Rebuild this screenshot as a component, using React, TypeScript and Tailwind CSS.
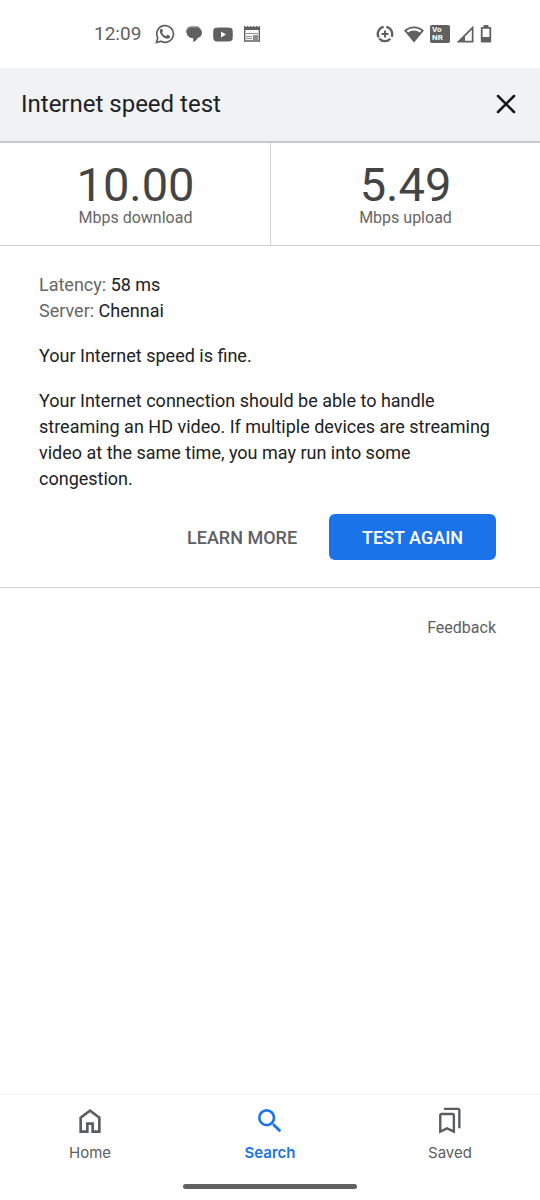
import type { ReactNode } from "react";

type Metric = { value: string; label: string };

const metrics: Metric[] = [
  { value: "10.00", label: "Mbps download" },
  { value: "5.49", label: "Mbps upload" },
];

const WhatsAppIcon = () => (
  <svg viewBox="0 0 24 24" className="size-5" fill="none" stroke="currentColor" strokeWidth="2" aria-hidden="true">
    <path d="M1.8 22.2l1.5-5.6a10 10 0 1 1 3.9 4z" />
    <path
      fill="currentColor"
      stroke="none"
      d="M8.9 6.4c-.3-.6-.7-.6-1-.6-1.300 0-2.100 1.300-2.100 2.800 0 3.700 5 9 9.200 9 1.600 0 3.200-1 3.200-2.600 0-.5-.1-.6-.5-.8l-2.300-1.100c-.4-.2-.7-.1-.9.2l-.9 1.100c-.2.2-.4.3-.7.1-1.900-.8-3.400-2.200-4.400-4-.1-.3 0-.5.200-.7l.6-.8c.2-.3.2-.5.1-.8z"
    />
  </svg>
);

const MessagesIcon = () => (
  <svg viewBox="0 0 18 18" className="size-[18px]" aria-hidden="true">
    <path fill="#8a8a8a" d="M1.200 8C.4 4 3 1.200 6 1.200h5.500c1.400 0 2.600.5 3.400 1.300z" />
    <path
      fill="currentColor"
      d="M6.500 2.700H12c3 0 5 2.100 5 5 0 2.700-1.600 4.600-4.100 5-.9 1.900-2.400 3.300-4.700 4.300v-3.800C4.300 13 1.700 10.700 1.700 7.700c0-2.900 2-5 4.800-5z"
    />
  </svg>
);

const YouTubeIcon = () => (
  <svg viewBox="0 0 20 15" className="h-[15px] w-5" aria-hidden="true">
    <path
      fill="currentColor"
      fillRule="evenodd"
      d="M3 .8C5 .4 15 .4 17 .8c1.500.2 2.400 1 2.600 2.500.3 2.500.3 6 0 8.400-.2 1.500-1.100 2.300-2.600 2.500-2 .4-12 .4-14 0C1.500 14 .6 13.200.4 11.700c-.3-2.400-.3-5.900 0-8.400C.6 1.800 1.500 1 3 .8zM8 4.500v6l5-3z"
    />
  </svg>
);

const NewsIcon = () => (
  <svg viewBox="0 0 18 16" className="h-4 w-[18px]" aria-hidden="true">
    <path fill="currentColor" d="M1 0h1.500v1H4V0h1.500v1H7V0h1.500v1H10V0h1.500v1H13V0h1.500v1H16V0h1v4H1z" />
    <path fill="none" stroke="currentColor" strokeWidth="1.400" d="M1.700 3v12h14.600V3" />
    <path fill="currentColor" d="M10 9h5v5h-5z" opacity=".7" />
    <path stroke="currentColor" opacity=".7" d="M3 7.500h12M3 10.500h6M3 12.500h6" />
  </svg>
);

const DataSaverIcon = () => (
  <svg viewBox="0 0 18 18" className="size-[18px]" fill="none" stroke="currentColor" aria-hidden="true">
    <path strokeWidth="2.400" d="M10.300 1.900a7.200 7.200 0 0 1 5.300 9.900M14.300 13.800A7.200 7.200 0 0 1 3.300 13.400M2.700 12.500A7.200 7.200 0 0 1 7.700 1.900" />
    <path strokeWidth="2" d="M9 5.500v7M5.500 9h7" />
  </svg>
);

const WifiIcon = () => (
  <svg viewBox="0 0 20 17" className="h-[17px] w-5" aria-hidden="true">
    <path fill="currentColor" fillRule="evenodd" d="M0 4.500C6-.8 14-.8 20 4.500L10 16.500zm2.600.3L4 6.500c3.600-2.700 8.400-2.700 12 0l1.400-1.700C13 1.500 7 1.500 2.600 4.800z" />
  </svg>
);

const SignalIcon = () => (
  <svg viewBox="0 0 18 18" className="size-[18px]" aria-hidden="true">
    <path fill="currentColor" fillRule="evenodd" d="M17.500.5v17H.5zM15.800 4.700l-6.800 6.800v4.300h6.800z" />
  </svg>
);

const BatteryIcon = () => (
  <svg viewBox="0 0 12 18" className="h-[18px] w-3" aria-hidden="true">
    <path fill="currentColor" fillRule="evenodd" d="M3.500 0h5v2H10c.8 0 1.200.5 1.200 1.200v13c0 .8-.5 1.300-1.200 1.300H2c-.8 0-1.200-.5-1.200-1.300v-13C.8 2.500 1.200 2 2 2h1.500zm-.9 3.800V12h6.800V3.800z" />
  </svg>
);

const CloseIcon = () => (
  <svg viewBox="0 0 20 20" className="size-5" fill="none" stroke="currentColor" strokeWidth="2.500" strokeLinecap="round" aria-hidden="true">
    <path d="M2 2l16 16M18 2L2 18" />
  </svg>
);

const navItems: { label: string; active?: boolean; icon: ReactNode }[] = [
  {
    label: "Home",
    icon: <path d="M6 19h3v-6h6v6h3v-9l-6-4.500L6 10v9zm-2 2V9l8-6 8 6v12h-7v-6h-2v6H4z" />,
  },
  {
    label: "Search",
    active: true,
    icon: (
      <path d="M15.500 14h-.79l-.28-.27A6.471 6.471 0 0 0 16 9.500 6.500 6.500 0 1 0 9.500 16c1.610 0 3.090-.59 4.230-1.570l.27.28v.79l5 4.990L20.490 19l-4.990-5zm-6 0C7.010 14 5 11.990 5 9.500S7.010 5 9.500 5 14 7.010 14 9.500 11.990 14 9.500 14z" />
    ),
  },
  {
    label: "Saved",
    icon: (
      <g fill="none" stroke="currentColor" strokeWidth="1.800">
        <path d="M7.500 2.900H18a1 1 0 0 1 1 1V17.500" />
        <path d="M5.600 6.700h8.400a.9.900 0 0 1 .9.900v12.300l-5.100-2.400-5.100 2.400V7.600a.9.900 0 0 1 .9-.9z" />
      </g>
    ),
  },
];

const StatusBar = () => (
  <div className="flex h-[68px] items-center justify-between pr-12 pl-[94px] text-[#606060]">
    <div className="flex items-center gap-2.5">
      <span className="mr-1 text-[19px]">12:09</span>
      <WhatsAppIcon />
      <MessagesIcon />
      <YouTubeIcon />
      <NewsIcon />
    </div>
    <div className="flex items-center gap-1.5">
      <DataSaverIcon />
      <div className="pl-1">
        <WifiIcon />
      </div>
      <div className="flex h-[18px] w-5 flex-col justify-center rounded-xs bg-[#606060] pl-0.5 text-[8px] leading-[8px] font-bold text-white">
        <span>Vo</span>
        <span>NR</span>
      </div>
      <SignalIcon />
      <BatteryIcon />
    </div>
  </div>
);

const App = () => {
  return (
    <div className="flex min-h-screen flex-col bg-white font-[Roboto,sans-serif] text-[#202124]">
      <StatusBar />

      <header className="flex h-[75px] items-center justify-between border-b-2 border-[#c6c7c8] bg-[#f1f2f4] pr-6 pb-0.5 pl-[21px]">
        <h1 className="text-2xl">Internet speed test</h1>
        <button type="button" aria-label="Close" className="text-[#111317]">
          <CloseIcon />
        </button>
      </header>

      <main className="flex-1">
        <section className="grid grid-cols-2 border-b border-[#d2d3d5]">
          {metrics.map((m) => (
            <div
              key={m.label}
              className="flex h-[102px] flex-col items-center border-l border-[#d2d3d5] pt-4 first:border-transparent"
            >
              <span className="text-[47px] leading-[51px] text-[#444]">{m.value}</span>
              <span className="text-base leading-4 text-[#666]">{m.label}</span>
            </div>
          ))}
        </section>

        <section className="border-b border-[#d2d3d5] pt-[26px] pb-[27px]">
          <div className="flex flex-col gap-[19px] px-[39px] text-[18px] leading-[26px]">
            <div>
              <p>
                <span className="text-[#666]">Latency:</span> 58 ms
              </p>
              <p>
                <span className="text-[#666]">Server:</span> Chennai
              </p>
            </div>
            <p>Your Internet speed is fine.</p>
            <p>
              Your Internet connection should be able to handle streaming an HD video. If multiple devices are
              streaming video at the same time, you may run into some congestion.
            </p>
          </div>
          <div className="mt-[22px] flex items-center justify-end gap-8 pr-11 text-[18px] font-medium">
            <button type="button" className="text-[#5f6063]">
              LEARN MORE
            </button>
            <button type="button" className="h-[46px] rounded-md bg-[#1a73e8] px-[33px] text-white">
              TEST AGAIN
            </button>
          </div>
        </section>

        <div className="flex justify-end pt-7 pr-11">
          <a href="#feedback" className="text-base text-[#5f6063]">
            Feedback
          </a>
        </div>
      </main>

      <nav className="border-t-2 border-[#f7f7f7] pb-[11px]">
        <div className="grid grid-cols-3 pt-[10px] font-[Inter,sans-serif]">
          {navItems.map((item) => (
            <a
              key={item.label}
              href={`#${item.label.toLowerCase()}`}
              className={`flex flex-col items-center gap-1 text-[15px] leading-6 ${
                item.active ? "font-semibold text-[#1a73e8]" : "text-[#5b5d61]"
              }`}
            >
              <svg viewBox="0 0 24 24" className="size-8" fill="currentColor" aria-hidden="true">
                {item.icon}
              </svg>
              {item.label}
            </a>
          ))}
        </div>
        <div className="mx-auto mt-[19px] h-[5px] w-[174px] rounded-full bg-[#616161]" />
      </nav>
    </div>
  );
};

export default App;
